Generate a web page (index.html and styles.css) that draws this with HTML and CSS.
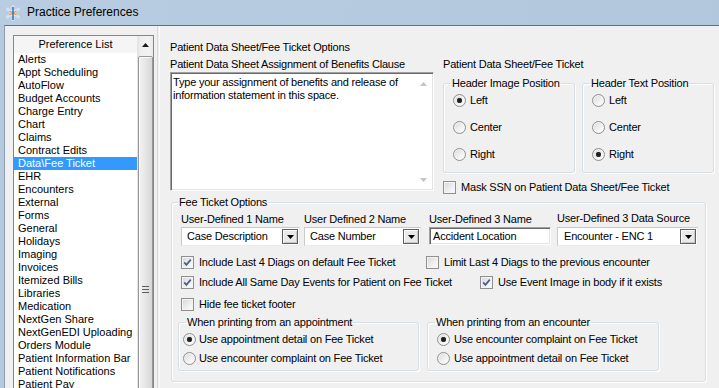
FILE: index.html
```html
<!DOCTYPE html>
<html>
<head>
<meta charset="utf-8">
<title>Practice Preferences</title>
<link rel="stylesheet" href="styles.css">
</head>
<body>
<div class="window">
  <div class="titlebar">
    <svg class="appicon" width="16" height="16" viewBox="0 0 16 16">
      <g stroke="#d3e0ee" stroke-width="3" stroke-linecap="round">
        <line x1="2.5" y1="4" x2="13.5" y2="12"/>
        <line x1="2.5" y1="12" x2="13.5" y2="4"/>
        <line x1="8" y1="1.5" x2="8" y2="14.5"/>
      </g>
      <circle cx="8" cy="8" r="3" fill="#f2f6fb"/>
      <path d="M4.5 6.2 Q8 8.5 11.5 6.2 M4.5 9.8 Q8 7.5 11.5 9.8" stroke="#e39530" stroke-width="1.3" fill="none"/>
      <line x1="8" y1="2" x2="8" y2="15" stroke="#2d7ad0" stroke-width="1.6"/>
    </svg>
    <span class="title">Practice Preferences</span>
  </div>
  <div class="client">
    <div class="leftpanel">
      <div class="listbox">
        <div class="listitems">
          <div class="listheader">Preference List</div>
          <div class="item">Alerts</div>
          <div class="item">Appt Scheduling</div>
          <div class="item">AutoFlow</div>
          <div class="item">Budget Accounts</div>
          <div class="item">Charge Entry</div>
          <div class="item">Chart</div>
          <div class="item">Claims</div>
          <div class="item">Contract Edits</div>
          <div class="item sel">Data\Fee Ticket</div>
          <div class="item">EHR</div>
          <div class="item">Encounters</div>
          <div class="item">External</div>
          <div class="item">Forms</div>
          <div class="item">General</div>
          <div class="item">Holidays</div>
          <div class="item">Imaging</div>
          <div class="item">Invoices</div>
          <div class="item">Itemized Bills</div>
          <div class="item">Libraries</div>
          <div class="item">Medication</div>
          <div class="item">NextGen Share</div>
          <div class="item">NextGenEDI Uploading</div>
          <div class="item">Orders Module</div>
          <div class="item">Patient Information Bar</div>
          <div class="item">Patient Notifications</div>
          <div class="item">Patient Pay</div>
        </div>
        <div class="vscroll">
          <div class="sb-up">
            <svg width="7" height="4" viewBox="0 0 7 4"><path d="M0 4 L3.5 0 L7 4 Z" fill="#1a1a1a"/></svg>
          </div>
          <div class="sb-thumb">
            <svg width="7" height="7" viewBox="0 0 7 7">
              <g stroke="#5e5e5e" stroke-width="1">
                <line x1="0" y1="0.5" x2="7" y2="0.5"/>
                <line x1="0" y1="3.5" x2="7" y2="3.5"/>
                <line x1="0" y1="6.5" x2="7" y2="6.5"/>
              </g>
            </svg>
          </div>
        </div>
      </div>
    </div>
    <div class="splitter"></div>
    <div class="rightpanel">
      <div class="label">Patient Data Sheet/Fee Ticket Options</div>
      <div class="toprow">
        <div class="clausecol">
          <div class="label">Patient Data Sheet Assignment of Benefits Clause</div>
          <div class="textarea">
            <div class="ta-text">Type your assignment of benefits and release of<br>information statement in this space.</div>
            <div class="ta-scroll">
              <svg width="7" height="4" viewBox="0 0 7 4"><path d="M0 4 L3.5 0 L7 4 Z" fill="#c4c4c4"/></svg>
              <svg width="7" height="4" viewBox="0 0 7 4"><path d="M0 0 L3.5 4 L7 0 Z" fill="#c4c4c4"/></svg>
            </div>
          </div>
        </div>
        <div class="headercol">
          <div class="label">Patient Data Sheet/Fee Ticket</div>
          <div class="posgroups">
            <fieldset class="group posgroup">
              <legend>Header Image Position</legend>
              <div class="posbody">
                <div class="opt"><span class="radio on"></span><span>Left</span></div>
                <div class="opt"><span class="radio"></span><span>Center</span></div>
                <div class="opt"><span class="radio"></span><span>Right</span></div>
              </div>
            </fieldset>
            <fieldset class="group posgroup">
              <legend>Header Text Position</legend>
              <div class="posbody">
                <div class="opt"><span class="radio"></span><span>Left</span></div>
                <div class="opt"><span class="radio"></span><span>Center</span></div>
                <div class="opt"><span class="radio on"></span><span>Right</span></div>
              </div>
            </fieldset>
          </div>
          <div class="opt check mask"><span class="cb"></span><span>Mask SSN on Patient Data Sheet/Fee Ticket</span></div>
        </div>
      </div>
      <fieldset class="group fee">
        <legend class="fee-legend">Fee Ticket Options</legend>
        <div class="feebody">
          <div class="fields">
            <div class="field f1">
              <div class="label">User-Defined 1 Name</div>
              <div class="combo w1"><span class="ctext">Case Description</span><span class="cbtn"><svg width="7" height="4" viewBox="0 0 7 4"><path d="M0 0 L3.5 4 L7 0 Z" fill="#000"/></svg></span></div>
            </div>
            <div class="field f2">
              <div class="label">User Defined 2 Name</div>
              <div class="combo w2"><span class="ctext">Case Number</span><span class="cbtn"><svg width="7" height="4" viewBox="0 0 7 4"><path d="M0 0 L3.5 4 L7 0 Z" fill="#000"/></svg></span></div>
            </div>
            <div class="field f3">
              <div class="label">User-Defined 3 Name</div>
              <div class="textbox">Accident Location</div>
            </div>
            <div class="field f4">
              <div class="label">User-Defined 3 Data Source</div>
              <div class="combo w4"><span class="ctext t4">Encounter - ENC 1</span><span class="cbtn"><svg width="7" height="4" viewBox="0 0 7 4"><path d="M0 0 L3.5 4 L7 0 Z" fill="#000"/></svg></span></div>
            </div>
          </div>
          <div class="cbrow r1">
            <div class="opt check c1"><span class="cb"><svg width="11" height="11" viewBox="0 0 11 11"><path d="M2.2 5.4 L4.4 7.9 L8.8 2.6" stroke="#4b5f8c" stroke-width="1.7" fill="none"/></svg></span><span>Include Last 4 Diags on default Fee Ticket</span></div>
            <div class="opt check"><span class="cb"></span><span>Limit Last 4 Diags to the previous encounter</span></div>
          </div>
          <div class="cbrow r2">
            <div class="opt check c2"><span class="cb"><svg width="11" height="11" viewBox="0 0 11 11"><path d="M2.2 5.4 L4.4 7.9 L8.8 2.6" stroke="#4b5f8c" stroke-width="1.7" fill="none"/></svg></span><span>Include All Same Day Events for Patient on Fee Ticket</span></div>
            <div class="opt check"><span class="cb"><svg width="11" height="11" viewBox="0 0 11 11"><path d="M2.2 5.4 L4.4 7.9 L8.8 2.6" stroke="#4b5f8c" stroke-width="1.7" fill="none"/></svg></span><span>Use Event Image in body if it exists</span></div>
          </div>
          <div class="cbrow r3">
            <div class="opt check"><span class="cb"></span><span>Hide fee ticket footer</span></div>
          </div>
          <div class="subgroups">
            <fieldset class="group sub s1">
              <legend>When printing from an appointment</legend>
              <div class="subbody">
                <div class="opt"><span class="radio on"></span><span>Use appointment detail on Fee Ticket</span></div>
                <div class="opt"><span class="radio"></span><span>Use encounter complaint on Fee Ticket</span></div>
              </div>
            </fieldset>
            <fieldset class="group sub s2">
              <legend>When printing from an encounter</legend>
              <div class="subbody">
                <div class="opt"><span class="radio on"></span><span>Use encounter complaint on Fee Ticket</span></div>
                <div class="opt"><span class="radio"></span><span>Use appointment detail on Fee Ticket</span></div>
              </div>
            </fieldset>
          </div>
        </div>
      </fieldset>
    </div>
  </div>
</div>
</body>
</html>
```

FILE: styles.css
```css
* { box-sizing: border-box; }

html, body {
  margin: 0;
  padding: 0;
  width: 719px;
  height: 388px;
  overflow: hidden;
}

body {
  background: #b6cadf;
  font-family: "Liberation Sans", Arial, sans-serif;
  font-size: 11px;
  line-height: 13px;
  color: #000;
}

.window {
  display: flex;
  flex-direction: column;
  height: 100%;
}

/* ---------- title bar ---------- */
.titlebar {
  height: 25px;
  flex: none;
  display: flex;
  align-items: center;
  padding-left: 5px;
  background: linear-gradient(100deg, #b9cde2, #b2c7dc);
}

.appicon { flex: none; }

.title {
  margin-left: 6px;
  font-size: 12px;
  line-height: 25px;
  color: #000;
}

/* ---------- client ---------- */
.client {
  flex: 1;
  min-height: 0;
  display: flex;
  margin-left: 4px;
  background: #f0f0f0;
  border-top: 1px solid #5f7188;
  border-left: 1px solid #8e9db0;
}

.leftpanel {
  width: 152px;
  flex: none;
  padding: 9px 0 0 8px;
}

.listbox {
  width: 141px;
  height: 520px;
  border: 1px solid #828790;
  background: #fff;
  display: flex;
}

.listitems {
  width: 123px;
  flex: none;
}

.listheader {
  height: 17px;
  line-height: 17px;
  text-align: center;
  background: #f5f5f5;
  white-space: nowrap;
}

.item {
  height: 13px;
  line-height: 13px;
  padding-left: 4px;
  white-space: nowrap;
}

.item.sel {
  background: #3399ff;
  color: #fff;
}

.vscroll {
  width: 16px;
  flex: none;
  display: flex;
  flex-direction: column;
  align-items: center;
  background: linear-gradient(to right, #e2e2e2, #efefef 25%, #f3f3f3 75%, #e9e9e9);
}

.sb-up {
  width: 16px;
  height: 17px;
  flex: none;
  display: flex;
  align-items: center;
  justify-content: center;
}

.sb-thumb {
  margin-top: 3px;
  width: 15px;
  height: 466px;
  flex: none;
  border: 1px solid #979797;
  border-radius: 2px;
  background: linear-gradient(to right, #f2f2f2, #e6e6e6 50%, #d7d7d7);
  box-shadow: inset 1px 1px 0 #fbfbfb;
  display: flex;
  align-items: center;
  justify-content: center;
}

.splitter {
  width: 3px;
  flex: none;
  border-left: 1px solid #dadada;
  border-right: 1px solid #fbfbfb;
}

/* ---------- right panel ---------- */
.rightpanel {
  flex: 1;
  padding: 15px 0 0 10px;
  display: flex;
  flex-direction: column;
  align-items: flex-start;
  letter-spacing: -0.2px;
}

.label {
  white-space: nowrap;
  line-height: 13px;
}

.toprow {
  margin-top: 4px;
  display: flex;
  align-items: flex-start;
}

.clausecol {
  width: 264px;
  flex: none;
}

.textarea {
  margin-top: 1px;
  width: 264px;
  height: 119px;
  background: #fff;
  border: 1px solid;
  border-color: #a0a0a0 #fff #fff #a0a0a0;
  box-shadow: inset 1px 1px 0 #696969, inset -1px -1px 0 #e3e3e3;
  display: flex;
}

.ta-text {
  flex: 1;
  padding: 3px 0 0 2px;
  white-space: nowrap;
}

.ta-scroll {
  width: 17px;
  flex: none;
  margin: 1px 1px 1px 0;
  display: flex;
  flex-direction: column;
  justify-content: space-between;
  align-items: center;
  padding: 8px 0 7px;
}

.headercol {
  margin-left: 9px;
  width: 271px;
  flex: none;
}

.posgroups {
  margin-top: 6px;
  display: flex;
  gap: 7px;
}

/* group boxes */
.group {
  margin: 0;
  padding: 0;
  min-inline-size: 0;
  border: 1px solid #d5dfe5;
  border-radius: 3px;
  box-shadow: inset 1px 1px 0 #fff, 1px 1px 0 #fff;
}

.group legend {
  margin-left: 7px;
  padding: 0 1px;
  line-height: 13px;
  white-space: nowrap;
}

.posgroup {
  width: 132px;
  height: 96px;
}

.posbody {
  padding: 4px 0 0 9px;
  display: flex;
  flex-direction: column;
  gap: 14px;
}

.opt {
  display: flex;
  align-items: center;
  gap: 4px;
  height: 13px;
  white-space: nowrap;
}

.opt.check { gap: 5px; }

.radio {
  width: 13px;
  height: 13px;
  flex: none;
  border: 1px solid #8f8f8f;
  border-radius: 50%;
  background: linear-gradient(135deg, #d9d9d9, #f7f7f7 70%, #ffffff);
  box-shadow: inset 0 0 0 1px #f4f4f4;
}

.radio.on {
  background:
    radial-gradient(circle at 50% 50%, #151515 0, #2b2b2b 2px, #444 2.5px, rgba(0,0,0,0) 3px),
    linear-gradient(135deg, #d9d9d9, #f7f7f7 70%, #ffffff);
}

.cb {
  width: 13px;
  height: 13px;
  flex: none;
  border: 1px solid #8e8f8f;
  background: linear-gradient(135deg, #d6d6d6, #f0f0f0 60%, #fbfbfb);
  box-shadow: inset 0 0 0 1px #f4f4f4;
  display: flex;
  align-items: center;
  justify-content: center;
}

.mask {
  margin-top: 8px;
  gap: 6px;
}

/* ---------- fee ticket options ---------- */
.fee {
  margin-top: 2px;
  margin-left: 1px;
  width: 535px;
}

.fee .fee-legend { margin-left: 6px; }

.feebody {
  padding: 4px 0 10px 9px;
}

.fields {
  display: flex;
  align-items: flex-start;
}

.field { flex: none; }
.f1 { width: 123px; }
.f2 { width: 125px; }
.f3 { width: 128px; }
.f4 { width: 141px; margin-top: -1px; }

.combo {
  margin-top: 1px;
  height: 19px;
  background: #fff;
  border: 1px solid;
  border-color: #c9c9c9 #ececec #ececec #c9c9c9;
  display: flex;
  align-items: center;
}

.f4 .combo { margin-top: 2px; }

.w1 { width: 119px; }
.w2 { width: 117px; }
.w4 { width: 141px; }

.ctext {
  flex: 1;
  padding-left: 5px;
  white-space: nowrap;
}

.ctext.t4 { padding-left: 6px; }

.cbtn {
  width: 16px;
  height: 15px;
  margin-right: 1px;
  flex: none;
  border: 1px solid #5f5f5f;
  background: #e9e9e9;
  box-shadow: inset 1px 1px 0 #fff, inset -1px -1px 0 #c8c8c8;
  display: flex;
  align-items: center;
  justify-content: center;
}

.textbox {
  margin-top: 1px;
  width: 122px;
  height: 18px;
  background: #fff;
  border: 1px solid;
  border-color: #a0a0a0 #fff #fff #a0a0a0;
  box-shadow: inset 1px 1px 0 #696969, inset -1px -1px 0 #e3e3e3;
  padding: 2px 0 0 3px;
  white-space: nowrap;
}

.cbrow {
  display: flex;
}

.r1 { margin-top: 10px; }
.r2 { margin-top: 7px; }
.r3 { margin-top: 9px; }

.c1 { width: 245px; }
.c2 { width: 299px; }

.subgroups {
  margin-top: 5px;
  margin-left: -3px;
  display: flex;
  gap: 8px;
}

.sub { flex: none; }
.s1 { width: 241px; }
.s2 { width: 232px; }

.subbody {
  padding: 4px 0 5px 4px;
  display: flex;
  flex-direction: column;
  gap: 6px;
}

.s1 .opt { gap: 3px; }
.s2 .subbody { padding-left: 9px; }
```
